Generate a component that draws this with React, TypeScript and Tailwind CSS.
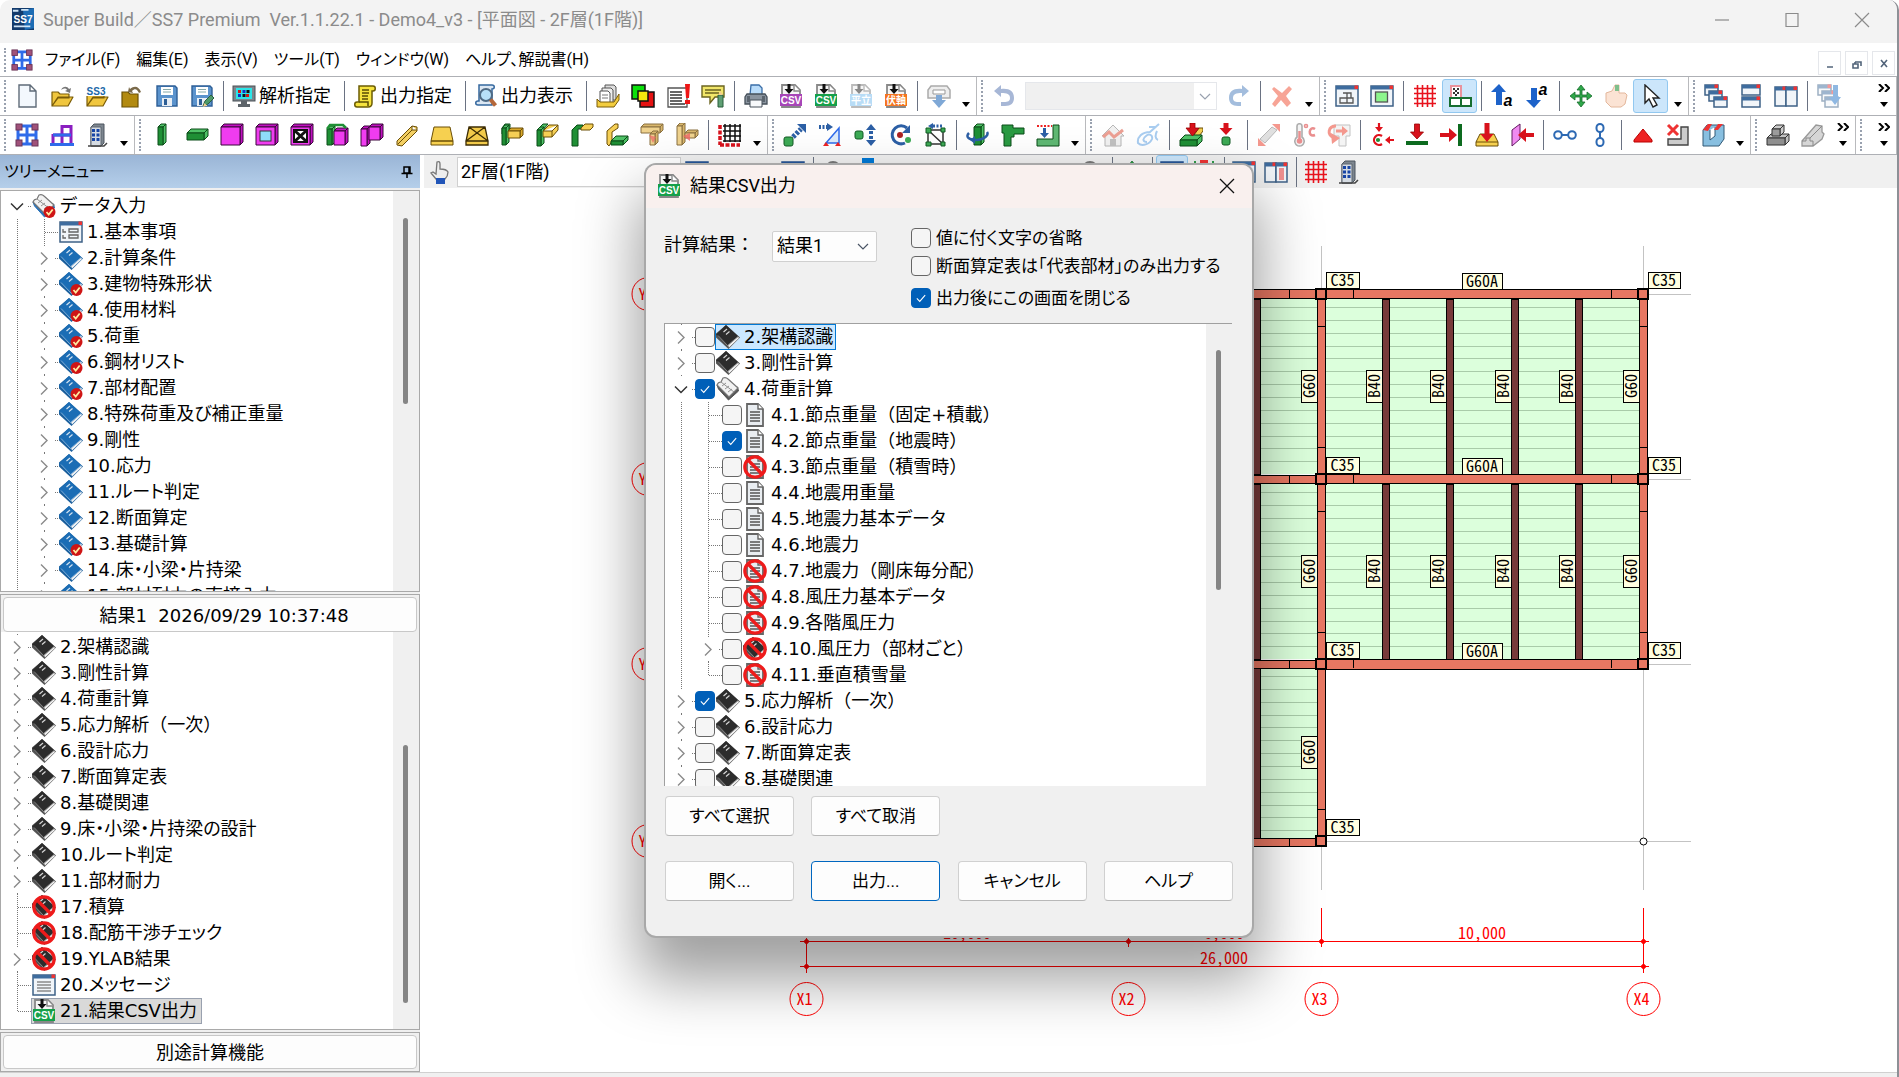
import React from "react";
import { clsx } from "clsx";

const TREE_FONT =
  "font-['DejaVu_Sans','Noto_Sans_CJK_JP',sans-serif] [font-feature-settings:'palt']";
const UI_FONT =
  "font-['Roboto','Noto_Sans_CJK_JP',sans-serif] [font-feature-settings:'palt']";

type PrismProps = {
  x: number;
  y: number;
  w: number;
  h: number;
  d?: number;
  fill: string;
  side: string;
  line?: string;
};

function Prism({ x, y, w, h, d = 3, fill, side, line = "#222" }: PrismProps) {
  return (
    <g stroke={line} strokeWidth="1" strokeLinejoin="round">
      <path
        d={`M${x} ${y}l${d} ${-d}h${w}v${h}l${-d} ${d}v${-h}z`}
        fill={side}
      />
      <path d={`M${x + w} ${y}l${d} ${-d}`} />
      <rect x={x} y={y} width={w} height={h} fill={fill} />
    </g>
  );
}

const GREEN = { fill: "#1f8f35", side: "#4fc267", line: "#0b4d18" };
const PINK = { fill: "#f03cf0", side: "#c010c0", line: "#3b063b" };
const GOLD = { fill: "#f5cf55", side: "#d9a92c", line: "#6b4e06" };
const TAN = { fill: "#efd28e", side: "#d9b76c", line: "#8a7140" };

const sheet = (
  <path d="M4 1h11l5 5v17H4z" fill="#e9edf1" stroke="#666" strokeWidth="1.8" />
);

function CsvArt({ color, label, faded }: { color: string; label: string; faded?: boolean }) {
  return (
    <g>
      <path d="M3 1h13l5 5v17H3z" fill="#f6f6f6" stroke={faded ? "#bbb" : "#888"} strokeWidth="1.8" />
      <path d="M15 1v6h6" fill="#fff" stroke={faded ? "#bbb" : "#888"} strokeWidth="1.4" />
      <rect x="1" y="10" width="22" height="12" fill={color} />
      <path d="M8.500 0v5h-3l4.500 5 4.500-5h-3v-5z" fill={faded ? "#888" : "#111"} />
      <text
        x="12"
        y="20"
        textAnchor="middle"
        fontSize="10"
        fontWeight="bold"
        fill="#fff"
        className="font-['Liberation_Sans','Noto_Sans_CJK_JP',sans-serif]"
      >
        {label}
      </text>
    </g>
  );
}

function BookArt({ cover, edge }: { cover: string; edge: string }) {
  return (
    <g strokeLinejoin="round">
      <path d="M10 0L24 12.500 12.500 24 0 12.500v-4z" fill={edge} />
      <path d="M22 11.500l1 1.500-10 9.500-1-2.500z" fill="#f4f4f4" />
      <path d="M10 0l12.500 11.500L11.500 21 0 9.500z" fill={cover} />
      <path d="M2 10.500l9.500 10 10.500-9" stroke="#fff" strokeOpacity=".55" strokeWidth=".8" fill="none" />
      <path d="M7.500 7l3.500-3M10 9.500l3.500-3" stroke="#fff" strokeOpacity=".8" strokeWidth="1.200" />
    </g>
  );
}

function OpenBookArt({ cover }: { cover: string }) {
  return (
    <g strokeLinejoin="round">
      <path d="M1 8l1.500 4 10 11 10-9-1-4z" fill={cover} stroke={cover} />
      <path d="M1 8c1-3 3-3 4-3l2-4c3-1 4 0 5 1l10 9-9 9z" fill="#f2f2f2" stroke="#777" strokeWidth="1.200" />
      <path d="M5 5l13 10M6 9l4-3M9 12l4-3M12 15l4-3" stroke="#888" strokeWidth=".9" fill="none" />
    </g>
  );
}

const checkBadge = (
  <g>
    <circle cx="17.500" cy="18" r="6" fill="#cf1515" />
    <path d="M14.500 18l2.200 2.500 4-5" stroke="#ffe9a0" strokeWidth="1.800" fill="none" />
  </g>
);

const prohibit = (
  <g fill="none" stroke="#ee1b1b" strokeWidth="3.200">
    <circle cx="12" cy="12" r="10.200" />
    <path d="M5 5l14 14" />
  </g>
);

const textPage = (
  <g>
    {sheet}
    <path d="M15 1v5h5" fill="#fff" stroke="#666" strokeWidth="1.400" />
    <path d="M7 9h10M7 12h10M7 15h10M7 18h10" stroke="#555" strokeWidth="1.400" />
  </g>
);

const redGrid = (
  <path
    d="M4.500 1v22M9.500 1v22M14.500 1v22M19.500 1v22M1 4.500h22M1 9.500h22M1 14.500h22M1 19.500h22"
    stroke="#e8121c"
    strokeWidth="1.600"
  />
);

const planFrame = (
  <g>
    <path d="M3 3h18v18H3zM3 12h18M12 3v18" fill="none" stroke="#2f6bea" strokeWidth="3" />
    {[
      [1, 1],
      [17, 1],
      [1, 17],
      [17, 17],
    ].map(([x, y]) => (
      <rect key={`${x}-${y}`} x={x} y={y} width="6" height="6" fill="#a0527a" stroke="#6b3558" />
    ))}
  </g>
);

const building = (
  <g>
    <path d="M6 4l3-3h10v19l-3 3H6z" fill="#7d868f" stroke="#4c555e" />
    <path d="M6 4h10v19H6z" fill="#d5dbe2" stroke="#5c656e" />
    <path d="M8.500 6v13M13 6v13" stroke="#1745a5" strokeWidth="3" strokeDasharray="3 1.500" />
    <path d="M3 23h16l3-3" stroke="#444" strokeWidth="1.500" fill="none" />
  </g>
);

function WindowArt({ children, x = 1, y = 2, w = 22, h = 20 }: { children?: React.ReactNode; x?: number; y?: number; w?: number; h?: number }) {
  return (
    <g>
      <rect x={x} y={y} width={w} height={h} fill="#f1f5f9" stroke="#3e6187" strokeWidth="1.500" />
      <rect x={x} y={y} width={w} height="3.500" fill="#3e6c9e" />
      <rect x={x + w - 3.500} y={y - 0.500} width="3.500" height="3.500" fill="#e33" />
      {children}
    </g>
  );
}

const folder = (
  <path d="M2 22V8h6l2 2h9v4H8zM2 22l6-9h15l-5 9z" fill="#f0c63e" stroke="#7a5c08" strokeWidth="1.200" strokeLinejoin="round" />
);

const floppy = (
  <g>
    <path d="M2 2h18l2 2v18H2z" fill="#5b93cd" stroke="#2e5f96" strokeWidth="1.400" />
    <rect x="6" y="3" width="12" height="8" fill="#fff" />
    <path d="M8 5.500h8M8 8h8" stroke="#8aa" />
    <rect x="7" y="14" width="10" height="8" fill="#e8eef5" />
    <rect x="9" y="15" width="3" height="6" fill="#2e5f96" />
  </g>
);

const downRed = <path d="M9.500 1h5v8h4l-6.500 7L5.500 9h4z" fill="#d8121c" stroke="#900" strokeWidth=".8" />;

const icons: Record<string, React.ReactNode> = {
  newFile: <path d="M4 1h11l6 6v16H4z M15 1v6h6" fill="#f3f8fd" stroke="#5f6b78" strokeWidth="1.400" />,
  open: (
    <g>
      {folder}
      <path d="M11 6c2-4 6-4 8-1l2-1-1 5-5-2 2-1c-1-2-3-2-6 0" fill="#777" />
    </g>
  ),
  ss3: (
    <g>
      {folder}
      <rect x="1" y="1" width="20" height="11" fill="#fff" />
      <text x="11" y="11" textAnchor="middle" fontSize="10" fontWeight="bold" fill="#2168a8" className="font-['Liberation_Sans',sans-serif]">
        SS3
      </text>
    </g>
  ),
  closeFolder: (
    <g>
      <path d="M2 23V8h6l2 2h8v13z" fill="#b28a10" stroke="#6b5104" strokeWidth="1.200" />
      <path d="M10 5c5-4 9-2 11 3l-2 1c-2-4-4-5-7-2l1 2-5-1 1-5z" fill="#7a6a4a" />
    </g>
  ),
  save: floppy,
  saveEdit: (
    <g>
      {floppy}
      <path d="M13 22l2-5 6-6 3 3-6 6z" fill="#4f9a6b" stroke="#2b5f3f" />
      <path d="M13 23l1.500-4 2.500 2.500z" fill="#f3cf8e" />
    </g>
  ),
  monitor: (
    <g>
      <rect x="1" y="2" width="22" height="15" fill="#7d868d" stroke="#4a5056" />
      <rect x="4" y="4" width="16" height="11" fill="#2ce5e8" />
      <path d="M6 6h3v3H6zM14 10h3v3h-3z" fill="#d31515" />
      <path d="M10.500 6h3v3h-3zM6 10h3v3H6z" fill="#1230c8" />
      <path d="M10.500 10h3v3h-3zM14.500 6h3v3h-3z" fill="#111" />
      <path d="M9 17h6v3h3v3H6v-3h3z" fill="#5d646a" />
    </g>
  ),
  scroll: (
    <g>
      <path d="M6 2h14c3 0 3 5 0 5h-1v12c0 3-2 4-4 4H4c-3 0-3-5 0-5h2z" fill="#f6e33e" stroke="#6b5c05" strokeWidth="1.500" />
      <path d="M9 6h7M9 9h7M9 12h6M9 15h6M6 18h9v4" stroke="#5b4e05" strokeWidth="1.500" fill="none" />
    </g>
  ),
  preview: (
    <g>
      <path d="M5 1h13c3 0 3 4 0 4v16H4c-3 0-3-4 0-4h1z" fill="#dbe7f3" stroke="#35689f" strokeWidth="1.500" />
      <circle cx="12" cy="11" r="6" fill="#b7e0f8" stroke="#4f6b85" strokeWidth="2" />
      <path d="M16.500 15.500l5 6" stroke="#b5673a" strokeWidth="4" />
    </g>
  ),
  files: (
    <g>
      <path d="M9 1h9l2 2v13H9z" fill="#ddd" stroke="#555" />
      <path d="M6 4h9l2 2v13H6z" fill="#eee" stroke="#555" />
      <path d="M4 7h8l2 2v10H4z" fill="#fff" stroke="#555" />
      <path d="M6 11h6M6 14h6" stroke="#777" />
      <path d="M1 15l3 3h14l5-8v6l-5 7H1z" fill="#f3cd3f" stroke="#7a5c08" />
    </g>
  ),
  overlap: (
    <g stroke="#111" strokeWidth="1.500">
      <path d="M1 1h13v14H1z" fill="#0be00b" />
      <path d="M9 8h14v15H9z" fill="#e51212" />
      <path d="M7 7h10v10H7z" fill="#f6e80e" />
    </g>
  ),
  listAlert: (
    <g>
      <path d="M2 4h19v19H2z" fill="#fff" stroke="#555" strokeWidth="1.300" />
      <path d="M4 8h12M4 11h12M4 14h12M4 17h12M4 20h15" stroke="#333" strokeWidth="1.600" />
      <path d="M19 0h5l-1 14h-3zM19 16h5v4h-5z" fill="#ee1515" />
    </g>
  ),
  note: (
    <g>
      <path d="M1 2h22v11h-9l-5 6v-6H1z" fill="#f1e66a" stroke="#6b6420" strokeWidth="1.400" />
      <path d="M4 6h16M4 9h14" stroke="#6b6420" strokeWidth="1.300" />
      <path d="M17 11h5v12h-5z" fill="#5f9f74" stroke="#295c3b" />
      <path d="M17 11l2.500-4 2.500 4z" fill="#f3cf8e" />
    </g>
  ),
  printer: (
    <g>
      <path d="M7 1h8l3 3v7H6z" fill="#b9dcfa" stroke="#3a6ea8" strokeWidth="1.300" />
      <path d="M3 10h18l2 3v7H1v-7z" fill="#8b95a0" stroke="#46505a" strokeWidth="1.300" />
      <path d="M6 16h12v7H6z" fill="#f7f9fb" stroke="#46505a" />
      <path d="M3 12h3v6H3zM18 12h3v6h-3z" fill="#5b656f" />
    </g>
  ),
  csvPurple: <CsvArt color="#a746b8" label="CSV" />,
  csvGreen: <CsvArt color="#16a04a" label="CSV" />,
  planCsv: <CsvArt color="#b8dcf6" label="平立" faded />,
  axisCsv: <CsvArt color="#f4741f" label="伏軸" />,
  exportGray: (
    <g>
      <path d="M4 2h16l3 4v8H1V6z" fill="#eee" stroke="#aaa" strokeWidth="1.500" />
      <path d="M6 6h12v4H6z" fill="#fff" stroke="#999" />
      <path d="M9 11h6v5h4l-7 8-7-8h4z" fill="#7fa8d6" />
    </g>
  ),
  undo: <path d="M2 7l7-6v4c8-1 13 2 13 9 0 5-3 8-9 8H9v-4h3c4 0 6-1 6-4 0-4-3-5-9-5v4z" fill="#a7b7d6" />,
  redo: <path d="M22 7l-7-6v4C7 4 2 7 2 14c0 5 3 8 9 8h3v-4h-3c-3 0-5-1-5-4 0-4 3-5 9-5v4z" fill="#a3bddd" />,
  cross: <path d="M4 3l8 6 7-7 3 3-6 7 5 7-4 4-6-7-6 7-3-3 6-8-6-7z" fill="#f7a496" />,
  winGrid: (
    <WindowArt>
      <path d="M8 9h4v5H5v5h13v-5h-6M12 9h4v5M12 14v5" fill="none" stroke="#555" strokeWidth="1.300" />
    </WindowArt>
  ),
  winGreen: (
    <WindowArt>
      <rect x="5.500" y="8" width="12" height="10" fill="#8df58d" stroke="#555" strokeWidth="1.300" />
    </WindowArt>
  ),
  redGrid,
  planBox: (
    <g>
      <path d="M3 2h10v12H3z" fill="#fff" stroke="#e9929c" strokeWidth="2" />
      <path d="M5 4h2v2H5zM9 4h2v2H9zM7 6h2v2H7zM5 8h2v2H5zM9 8h2v2H9zM7 10h2v2H7z" fill="#333" />
      <path d="M2 14h11v8H2zM13 14h10v8H13z" fill="#fff" stroke="#166e30" strokeWidth="2" />
    </g>
  ),
  sortUp: (
    <g>
      <path d="M8 0l7 8h-4v13H5V8H0z" fill="#1d62c9" />
      <text x="17" y="22" textAnchor="middle" fontSize="16" fontStyle="italic" fontWeight="bold" className="font-['Liberation_Sans',sans-serif]">a</text>
    </g>
  ),
  sortDown: (
    <g>
      <path d="M8 24l7-8h-4V4H5v12H0z" fill="#1d62c9" />
      <text x="17" y="11" textAnchor="middle" fontSize="16" fontStyle="italic" fontWeight="bold" className="font-['Liberation_Sans',sans-serif]">a</text>
    </g>
  ),
  move: (
    <path
      d="M12 1l4 5h-3v5h5V8l5 4-5 4v-3h-5v5h3l-4 5-4-5h3v-5H6v3l-5-4 5-4v3h5V6H8z"
      fill="#2fa84a"
      stroke="#176b2b"
      strokeWidth=".8"
    />
  ),
  thumb: (
    <g>
      <path d="M2 9l6-2 3-6h4v8h6l2 2-2 9-4 3H7l-5-5z" fill="#fbe3d4" stroke="#e3b79c" />
      <path d="M11 1h4v6h-4z" fill="#7ebf8c" />
    </g>
  ),
  cursor: <path d="M6 1v18l4-4 4 8 4-2-4-7h6z" fill="#fff" stroke="#222" strokeWidth="1.400" />,
  cascade: (
    <g>
      <WindowArt x={1} y={1} w={13} h={10} />
      <WindowArt x={5} y={7} w={13} h={10} />
      <WindowArt x={10} y={13} w={13} h={10} />
    </g>
  ),
  tileH: (
    <g>
      <WindowArt x={3} y={1} w={18} h={10} />
      <WindowArt x={3} y={13} w={18} h={10} />
    </g>
  ),
  tileV: (
    <g>
      <WindowArt x={1} y={3} w={11} h={19} />
      <WindowArt x={12} y={3} w={11} h={19} />
    </g>
  ),
  cascadeDown: (
    <g>
      <g opacity=".5">
        <WindowArt x={1} y={1} w={13} h={10} />
        <WindowArt x={5} y={7} w={13} h={10} />
        <WindowArt x={8} y={13} w={13} h={10} />
      </g>
      <path d="M16 1h5v12h3l-6 8-6-8h4z" fill="#8fb8e2" />
    </g>
  ),
  planFrame,
  frame: (
    <g fill="none" stroke="#8a1ec0" strokeWidth="3">
      <path d="M3 11v10M12 2v19M21 2v19M12 3.500h9M3 12h18" />
      <path d="M3 12h18" stroke="#2f6bea" />
      <path d="M0 21.500h24" stroke="#2f6bea" />
    </g>
  ),
  building,
  column: <Prism x={8} y={4} w={5} h={18} {...GREEN} />,
  beam: <Prism x={2} y={10} w={17} h={7} d={4} {...GREEN} />,
  wall: <Prism x={1} y={4} w={19} h={18} {...PINK} />,
  wallWindow: (
    <g>
      <Prism x={1} y={4} w={19} h={18} {...PINK} />
      <rect x="5" y="8" width="11" height="10" fill="#8fdcfa" stroke="#333" />
    </g>
  ),
  wallCross: (
    <g>
      <Prism x={1} y={4} w={19} h={18} {...PINK} />
      <rect x="4" y="7" width="13" height="12" fill="#fff" stroke="#111" strokeWidth="2" />
      <path d="M4 7l13 12M17 7L4 19" stroke="#111" strokeWidth="3" />
    </g>
  ),
  wallColumn: (
    <g>
      <Prism x={2} y={6} w={5} h={16} {...GREEN} />
      <Prism x={9} y={8} w={11} h={14} {...PINK} />
      <path d="M2 6l3-4h13l3 3" fill="none" stroke="#1f8f35" strokeWidth="2.500" />
    </g>
  ),
  wallSide: (
    <g>
      <Prism x={1} y={6} w={6} h={17} {...PINK} />
      <Prism x={9} y={4} w={11} h={13} {...PINK} />
    </g>
  ),
  brace: <path d="M2 18L17 3l5 1v4L7 23l-5-1z M17 3v4l5 0M17 7L3 21" fill="#f3cf62" stroke="#6b4e06" />,
  slab: <path d="M4 4h16l3 14H1zM1 18h22v4H1z" fill="#f6d050" stroke="#6b4e06" strokeLinejoin="round" />,
  slabCross: <path d="M4 4h16l3 14H1zM1 18h22v4H1zM4 4l19 14M20 4L1 18" fill="#f2ca4a" stroke="#3c2c04" strokeWidth="1.300" />,
  joint1: (
    <g>
      <path d="M2 5l3-4h5v5H6v5H2z" fill="#4fc267" stroke="#0b4d18" />
      <Prism x={2} y={5} w={4} h={17} {...GREEN} />
      <Prism x={8} y={8} w={12} h={7} {...GOLD} />
    </g>
  ),
  joint2: (
    <g>
      <path d="M2 7l6-6h5L7 8z" fill="#4fc267" stroke="#0b4d18" />
      <Prism x={2} y={7} w={4} h={16} {...GREEN} />
      <path d="M8 8l6-6h9v5l-6 7H8z M8 8h9l6-6M17 8v6" fill="#f5cf55" stroke="#6b4e06" />
    </g>
  ),
  joint3: (
    <g>
      <path d="M2 23V7l5-5h6v4H8v17z" fill="#1f8f35" stroke="#0b4d18" />
      <path d="M11 5l4-4h8v3l-3 3h-9z" fill="#f5cf55" stroke="#6b4e06" />
    </g>
  ),
  joint4: (
    <g>
      <path d="M2 21V8l8-7h3v4L7 9v9l-3 5z" fill="#f5cf55" stroke="#6b4e06" />
      <Prism x={6} y={18} w={12} h={4} d={5} {...GREEN} />
    </g>
  ),
  tee: (
    <g>
      <Prism x={1} y={4} w={19} h={6} {...TAN} />
      <Prism x={10} y={11} w={5} h={11} {...TAN} />
      <path d="M9 12l7 2-3 6z" fill="#e66" opacity=".7" />
    </g>
  ),
  teeSide: (
    <g>
      <Prism x={2} y={3} w={5} h={19} {...TAN} />
      <Prism x={10} y={10} w={10} h={5} {...TAN} />
      <path d="M8 13l7-3v8z" fill="#e66" opacity=".8" />
    </g>
  ),
  gridBlack: (
    <g>
      <path d="M7 1v18M12 1v18M17 1v18M22 1v18M5 3h18M5 8h18M5 13h18M5 18h18" stroke="#111" strokeWidth="1.500" />
      <path d="M2 2v20M2 22h20" stroke="#d8121c" strokeWidth="3.500" strokeDasharray="4 1.500" />
    </g>
  ),
  moveNode: (
    <g>
      <rect x="1" y="14" width="9" height="9" rx="2" fill="#3daa55" stroke="#135c25" />
      <path d="M10 14l8-8" stroke="#2c5fa5" strokeWidth="5" strokeDasharray="3 1.500" />
      <path d="M14 1h9v9z" fill="#2c5fa5" />
    </g>
  ),
  moveSupport: (
    <g>
      <path d="M21 5v15H8z" fill="#dcebfb" stroke="#2f6bea" strokeWidth="1.500" />
      <path d="M1 4h8" stroke="#2c5fa5" strokeWidth="4" strokeDasharray="2 1.500" />
      <path d="M9 0l6 4-6 4z" fill="#2c5fa5" />
      <path d="M5 23l3-4 3 4zM17 23l3-4 3 4z" fill="#e22" />
    </g>
  ),
  moveVert: (
    <g>
      <rect x="2" y="8" width="8" height="8" rx="2" fill="#3daa55" stroke="#135c25" />
      <path d="M18 1l5 6H13zM18 23l5-6H13zM16 8h4v3h-4zM16 13h4v3h-4z" fill="#2c5fa5" />
    </g>
  ),
  rotateNode: (
    <g>
      <path d="M19 5a9 9 0 1 0-2 15" fill="none" stroke="#2c5fa5" strokeWidth="3" />
      <path d="M22 2v8h-8z" fill="#2c5fa5" />
      <circle cx="12" cy="12" r="3" fill="#a22" />
      <circle cx="20" cy="17" r="3" fill="#3daa55" />
    </g>
  ),
  scaleNode: (
    <g>
      <path d="M5 7h15v14H5zM5 7l15 14" fill="none" stroke="#333" strokeWidth="1.500" />
      <path d="M19 3h-9" stroke="#2c5fa5" strokeWidth="3" strokeDasharray="2 1.500" />
      <path d="M10 0v6L5 3z" fill="#2c5fa5" />
      <path d="M3 5h5v5H3zM18 5h4v4h-4zM3 19h5v4H3zM18 19h4v4h-4z" fill="#3daa55" stroke="#135c25" />
    </g>
  ),
  spin: (
    <g>
      <Prism x={8} y={4} w={7} h={18} {...GREEN} />
      <path d="M3 10c-4 4 0 7 8 7 8-1 12-5 10-8" fill="none" stroke="#2c5fa5" strokeWidth="2.500" />
      <path d="M9 13v8l-5-4z" fill="#2c5fa5" />
    </g>
  ),
  corner: <path d="M1 2h11v3h11v6H13v3h-3v9H3V10H1z" fill="#2a9a42" stroke="#0b4d18" />,
  level: (
    <g>
      <path d="M1 23v-7h16V2h6v21z" fill="#5fb873" stroke="#0b4d18" />
      <path d="M1 3h15" stroke="#e22" strokeWidth="2" strokeDasharray="2 1.500" />
      <path d="M7 5v5H4l4.500 5 4.500-5h-3V5z" fill="#2c5fa5" />
    </g>
  ),
  house: (
    <g opacity=".6">
      <path d="M1 13L12 2l11 11h-3v10H4V13z" fill="#e8e8e8" stroke="#888" />
      <path d="M2 14l6-5 5 5 9-7" stroke="#e0604c" strokeWidth="3" fill="none" />
      <rect x="9" y="16" width="6" height="7" fill="#999" />
    </g>
  ),
  wind: (
    <g fill="none" stroke="#a9cdf0" strokeWidth="2">
      <path d="M23 1l-9 8C6 9 1 14 2 20c4 4 12 1 14-4 1-4-3-6-6-3-4 3-3 6 1 6M13 4h6M21 8c-2 4-2 8 1 9" />
    </g>
  ),
  loadBeam: (
    <g>
      <path d="M15 12l5-7h4v3l-7 9z" fill="#f5cf55" stroke="#6b4e06" />
      <Prism x={1} y={17} w={17} h={6} d={5} {...GREEN} />
      <path d="M11 0h5v5h4l-6.500 8L7 5h4z" fill="#d8121c" stroke="#900" strokeWidth=".8" />
    </g>
  ),
  loadNode: (
    <g>
      <path d="M9.500 0h5v5h4L12 12 5.500 5h4z" fill="#d8121c" />
      <rect x="8" y="14" width="8" height="8" rx="2" fill="#3daa55" stroke="#135c25" />
    </g>
  ),
  memberGray: (
    <g opacity=".6">
      <path d="M3 16L15 4l5 3L8 20z" fill="#ccc" stroke="#888" />
      <path d="M15 1h8v8zM1 15v8h8z" fill="#e54" />
    </g>
  ),
  temperature: (
    <g opacity=".6" fill="none" stroke="#d44" strokeWidth="1.600">
      <path d="M5 3c0-3 5-3 5 0v11c4 3 2 9-2.500 9S1 17 5 14z" fill="#eee" stroke="#777" />
      <path d="M7.500 8v8" strokeWidth="2.500" />
      <circle cx="7.500" cy="18" r="2" fill="#d44" />
      <circle cx="14" cy="3" r="1.500" />
      <path d="M23 6c-6-4-8 9 0 6" strokeWidth="2.500" />
    </g>
  ),
  rotateGray: (
    <g opacity=".6">
      <path d="M7 2h16v11h-4v10h-7V13H7z" fill="#eee" stroke="#999" />
      <path d="M9 3C1 3 0 12 6 14M9 8h8" fill="none" stroke="#e54" strokeWidth="3" />
      <path d="M4 10l9 5-8 6zM15 3l6 5-6 5z" fill="#e54" />
    </g>
  ),
  moment: (
    <g fill="none" stroke="#e0121c" strokeWidth="2.200">
      <path d="M9 0v5M24 17h-5M12 13a5 5 0 1 0 0 8" />
      <path d="M9 9L5 4h8zM15 17l5-4v8z" fill="#e0121c" stroke="none" />
      <circle cx="8" cy="17" r="1" fill="#1f8f35" stroke="#1f8f35" />
    </g>
  ),
  loadGround: (
    <g>
      {downRed}
      <rect x="1" y="18" width="22" height="4" fill="#0d6b1f" />
    </g>
  ),
  loadWall: (
    <g>
      <path d="M0 10h9V5l8 7-8 7v-5H0z" fill="#d8121c" />
      <rect x="18" y="1" width="4" height="22" fill="#0d6b1f" />
    </g>
  ),
  loadSlab: (
    <g>
      <path d="M5 11h14l4 8v4H1v-4z M1 19h22" fill="#f6d050" stroke="#6b4e06" />
      <path d="M9.500 0h5v11h4l-6.500 8-6.500-8h4z" fill="#d8121c" />
    </g>
  ),
  loadPanel: (
    <g>
      <path d="M2 7l8-6v15l-8 7z" fill="#f08af0" stroke="#611a61" />
      <path d="M24 10h-8V5l-8 7 8 7v-5h8z" fill="#d8121c" />
    </g>
  ),
  linkH: (
    <g fill="#fff" stroke="#2d69b3" strokeWidth="2">
      <path d="M7 12h10" />
      <circle cx="5" cy="12" r="3.800" />
      <circle cx="19" cy="12" r="3.800" />
    </g>
  ),
  linkV: (
    <g fill="#fff" stroke="#2d69b3" strokeWidth="2">
      <path d="M12 7v10" />
      <rect x="8.500" y="1" width="7" height="8" rx="3.500" />
      <rect x="8.500" y="15" width="7" height="8" rx="3.500" />
    </g>
  ),
  support: <path d="M12 6l9 11v2H3v-2z" fill="#ee2222" stroke="#b00" />,
  cornerCut: (
    <g>
      <path d="M15 4h7v18H2v-6h13z" fill="#ccc" stroke="#444" strokeWidth="1.400" />
      <path d="M2 2l10 10M12 2L2 12" stroke="#e33" strokeWidth="3" />
    </g>
  ),
  pocket: (
    <g>
      <path d="M2 7l4-5h17v14l-5 7H2z" fill="#88bfe0" stroke="#335a77" />
      <path d="M9 7v10l5-4V4" fill="#fff" stroke="#335a77" />
      <path d="M2 7l5-6h4L7 8zM13 7l4-6h5l-5 6z" fill="#e33" />
    </g>
  ),
  footing: (
    <g>
      <Prism x={1} y={15} w={18} h={7} d={4} fill="#8f8f8f" side="#c2c2c2" line="#333" />
      <Prism x={6} y={6} w={8} h={7} d={4} fill="#9b9b9b" side="#ccc" line="#333" />
    </g>
  ),
  footingLong: (
    <g>
      <path d="M1 18L15 2l6 1v6l2 2-2 5-9 7H1z" fill="#d6d6d6" stroke="#999" strokeWidth="1.300" />
      <path d="M1 18h4v-3h4v3h3v5M9 15l12-12" fill="none" stroke="#888" />
    </g>
  ),
  hand: (
    <g>
      <path d="M9 2c2-1 3 0 3 2v5c3 0 7 1 8 3 0 3-1 5-3 7H8l-5-6 2-1 3 2z" fill="#eee" stroke="#777" strokeWidth="1.300" />
      <rect x="8" y="18" width="9" height="6" fill="#2155b8" />
    </g>
  ),
  magnifier: <circle cx="12" cy="9" r="7" fill="#e5eef5" stroke="#777" strokeWidth="2" />,
  magnifierPlus: <path d="M5 9a7 7 0 1 0 14 0a7 7 0 1 0-14 0M12 5v8M8 9h8" fill="#e5eef5" stroke="#777" strokeWidth="2" />,
  app: (
    <g>
      <rect x="0" y="0" width="24" height="24" fill="#123a6b" />
      <path d="M12 2l12-2v22l-10 2z" fill="#1d6cb4" />
      <path d="M1 3h6M10 2h8M2 20h18" stroke="#cfe4f5" strokeWidth="2" />
      <text x="12" y="16" textAnchor="middle" fontSize="11" fontWeight="bold" fill="#fff" className="font-['Liberation_Sans',sans-serif]">
        SS7
      </text>
    </g>
  ),
  splitWindow: (
    <g>
      <WindowArt x={1} y={3} w={11} h={19} />
      <WindowArt x={12} y={3} w={11} h={19}>
        <rect x="15" y="8" width="5" height="12" fill="#f09090" />
      </WindowArt>
    </g>
  ),
  form: (
    <WindowArt>
      <path d="M4 9v3h3M4 15v3h3M10 9h9v3h-9zM10 15h9v3h-9z" fill="none" stroke="#666" strokeWidth="1.300" />
    </WindowArt>
  ),
  message: (
    <WindowArt>
      <path d="M5 9h14M5 12h14M5 15h14M5 18h14" stroke="#8a8a8a" strokeWidth="1.300" />
    </WindowArt>
  ),
  panelBlue: <rect x="1" y="2" width="22" height="20" fill="#2f66b5" stroke="#24508f" strokeWidth="1.500" />,
  chart: (
    <g>
      <path d="M3 1v22M21 1v22" stroke="#2f9a48" strokeWidth="2" />
      <path d="M8 0h8v10H8zM4 4h4v10H4zM16 4h4v10h-4z" fill="#e33" />
    </g>
  ),
  book: <BookArt cover="#1b6db5" edge="#1b5f9c" />,
  bookChecked: (
    <g>
      <BookArt cover="#1b6db5" edge="#1b5f9c" />
      {checkBadge}
    </g>
  ),
  bookOpenChecked: (
    <g>
      <OpenBookArt cover="#2a72b8" />
      {checkBadge}
    </g>
  ),
  bookOpen: <OpenBookArt cover="#555" />,
  bookDark: <BookArt cover="#2c2c2c" edge="#555" />,
  bookBanned: (
    <g>
      <BookArt cover="#2c2c2c" edge="#555" />
      {prohibit}
    </g>
  ),
  page: textPage,
  pageBanned: (
    <g>
      {textPage}
      {prohibit}
    </g>
  ),
};

function Icon({ name, className = "size-6" }: { name: string; className?: string }) {
  return (
    <svg viewBox="0 0 24 24" className={clsx("shrink-0", className)} aria-hidden="true">
      {icons[name]}
    </svg>
  );
}

type ToolItem = string | { icon: string; label?: string; active?: boolean };
type ToolGroup = { items: ToolItem[]; menu?: boolean; overflow?: boolean; fill?: boolean };

const mainTools: ToolGroup[] = [
  {
    menu: true,
    items: [
      "newFile", "open", "ss3", "closeFolder", "save", "saveEdit", "|",
      { icon: "monitor", label: "解析指定" }, "|",
      { icon: "scroll", label: "出力指定" }, "|",
      { icon: "preview", label: "出力表示" }, "|",
      "files", "overlap", "listAlert", "note", "|",
      "printer", "csvPurple", "csvGreen", "planCsv", "axisCsv", "|", "exportGray",
    ],
  },
  { menu: true, items: ["undo", "history", "redo", "|", "cross"] },
  {
    menu: true,
    items: [
      "winGrid", "winGreen", "|", "redGrid", { icon: "planBox", active: true }, "|",
      "sortUp", "sortDown", "|", "move", "thumb", { icon: "cursor", active: true },
    ],
  },
  { overflow: true, fill: true, items: ["cascade", "tileH", "tileV", "|", "cascadeDown"] },
];

const memberTools: ToolGroup[] = [
  { menu: true, items: ["planFrame", "frame", "building"] },
  {
    menu: true,
    items: [
      "column", "beam", "wall", "wallWindow", "wallCross", "wallColumn", "wallSide", "brace",
      "slab", "slabCross", "joint1", "joint2", "joint3", "joint4", "tee", "teeSide", "|", "gridBlack",
    ],
  },
  {
    menu: true,
    items: ["moveNode", "moveSupport", "moveVert", "rotateNode", "scaleNode", "|", "spin", "corner", "level"],
  },
  {
    menu: true,
    items: [
      "house", "wind", "|", "loadBeam", "loadNode", "|", "memberGray", "temperature", "rotateGray", "|",
      "moment", "loadGround", "loadWall", "loadSlab", "loadPanel", "|", "linkH", "linkV", "|",
      "support", "cornerCut", "pocket",
    ],
  },
  { overflow: true, items: ["footing", "footingLong"] },
  { overflow: true, fill: true, items: [] },
];

function Separator() {
  return (
    <span className="flex w-2 shrink-0 justify-center">
      <span className="h-[30px] w-px bg-gray-500" />
    </span>
  );
}

function DropArrow() {
  return (
    <svg viewBox="0 0 8 5" className="h-[5px] w-2" aria-hidden="true">
      <path d="M0 0h8L4 5z" fill="#000" />
    </svg>
  );
}

function Chevron({ className }: { className?: string }) {
  return (
    <svg viewBox="0 0 12 7" className={clsx("h-[7px] w-3 shrink-0", className)} aria-hidden="true">
      <path d="M1 1l5 5 5-5" fill="none" stroke="currentColor" strokeWidth="1.200" />
    </svg>
  );
}

function Tool({ item }: { item: ToolItem }) {
  if (item === "|") return <Separator />;
  if (item === "history") {
    return (
      <span className="mx-1 flex h-7 w-[192px] shrink-0 border border-gray-200">
        <select aria-label="履歴" disabled className="min-w-0 grow appearance-none bg-[#f0f0f0]" />
        <span className="flex w-[22px] items-center justify-center text-gray-400">
          <Chevron />
        </span>
      </span>
    );
  }
  const tool = typeof item === "string" ? { icon: item } : item;
  const { icon, label, active } = tool as { icon: string; label?: string; active?: boolean };
  return (
    <button
      type="button"
      aria-label={label ?? icon}
      className={clsx(
        "flex shrink-0 items-center text-lg leading-6",
        label ? "h-[34px] w-[113px] gap-[3px] pl-[5px]" : "h-[34px] w-[35px] justify-center",
        active && "rounded-[3px] border border-[#92c8f0] bg-[#cce6fb]"
      )}
    >
      <Icon name={icon} />
      {label && <span className="whitespace-nowrap">{label}</span>}
    </button>
  );
}

function Toolbar({ groups }: { groups: ToolGroup[] }) {
  return (
    <div className="flex h-[39px] shrink-0 items-stretch overflow-hidden border-b border-[#aeb0b5] bg-white">
      {groups.map((group, i) => (
        <div
          key={i}
          className={clsx(
            "flex items-center border-r border-[#b9babd]",
            group.fill ? "grow" : "shrink-0"
          )}
        >
          <span className="flex w-[9px] shrink-0 justify-center">
            <span className="h-8 border-l-2 border-dotted border-gray-400" />
          </span>
          {group.items.map((item, n) => (
            <Tool key={n} item={item} />
          ))}
          {group.menu && (
            <button type="button" aria-label="その他" className="flex h-full w-5 items-end justify-center pb-2">
              <DropArrow />
            </button>
          )}
          {group.overflow && (
            <button
              type="button"
              aria-label="ツールバーのオプション"
              className="ml-auto flex h-full w-[25px] flex-col items-center justify-between pt-[7px] pb-2"
            >
              <svg viewBox="0 0 12 8" className="h-2 w-3" aria-hidden="true">
                <path d="M1 0l4 4-4 4M7 0l4 4-4 4" fill="none" stroke="#000" strokeWidth="2" />
              </svg>
              <DropArrow />
            </button>
          )}
        </div>
      ))}
    </div>
  );
}

type Cell = "line" | "tee" | "end" | "closed" | "open";

// One 27px column of tree guides: dotted connectors, or an expander chevron
function Guide({ kind }: { kind: Cell }) {
  const dotted = { stroke: "#777", strokeDasharray: "1 1", fill: "none" };
  return (
    <svg viewBox="0 0 27 26" className="h-[26px] w-[27px] shrink-0" aria-hidden="true">
      {kind === "line" && <path d="M13.500 0v26" {...dotted} />}
      {kind === "tee" && <path d="M13.500 0v26M14 13.500h13" {...dotted} />}
      {kind === "end" && <path d="M13.500 0v14M14 13.500h13" {...dotted} />}
      {kind === "closed" && (
        <g>
          <path d="M13.500 0v2M13.500 25v1M24 13.500h3" {...dotted} />
          <path d="M10 7.500l6 6-6 6" fill="none" stroke="#8a8a8a" strokeWidth="1.400" />
        </g>
      )}
      {kind === "open" && (
        <g>
          <path d="M24 13.500h3" {...dotted} />
          <path d="M7 10.500l6 6 6-6" fill="none" stroke="#333" strokeWidth="1.500" />
        </g>
      )}
    </svg>
  );
}

// Kana are set proportionally, full-width brackets and colons keep their full advance
function Label({ text }: { text: string }) {
  return (
    <span className="whitespace-pre">
      {text.split(/([（）：])/).map((part, i) =>
        /^[（）：]$/.test(part) ? (
          <span key={i} className="[font-feature-settings:normal]">{part}</span>
        ) : (
          part
        )
      )}
    </span>
  );
}

type TreeNode = { text: string; icon: string; cells: Cell[]; selected?: boolean; checked?: boolean };

const child = (text: string, icon = "book"): TreeNode => ({ text, icon, cells: ["line", "closed"] });

const inputTree: TreeNode[] = [
  { text: "データ入力", icon: "bookOpenChecked", cells: ["open"] },
  { text: "1.基本事項", icon: "form", cells: ["line", "tee"] },
  child("2.計算条件"),
  child("3.建物特殊形状", "bookChecked"),
  child("4.使用材料", "bookChecked"),
  child("5.荷重", "bookChecked"),
  child("6.鋼材リスト", "bookChecked"),
  child("7.部材配置", "bookChecked"),
  child("8.特殊荷重及び補正重量"),
  child("9.剛性"),
  child("10.応力"),
  child("11.ルート判定"),
  child("12.断面算定"),
  child("13.基礎計算", "bookChecked"),
  child("14.床・小梁・片持梁"),
  child("15.部材耐力の直接入力"),
];

const closed = (text: string, icon = "bookDark"): TreeNode => ({ text, icon, cells: ["closed"] });

const resultTree: TreeNode[] = [
  closed("2.架構認識"),
  closed("3.剛性計算"),
  closed("4.荷重計算"),
  closed("5.応力解析（一次）"),
  closed("6.設計応力"),
  closed("7.断面算定表"),
  closed("8.基礎関連"),
  closed("9.床・小梁・片持梁の設計"),
  closed("10.ルート判定"),
  closed("11.部材耐力"),
  { text: "17.積算", icon: "bookBanned", cells: ["tee"] },
  { text: "18.配筋干渉チェック", icon: "bookBanned", cells: ["tee"] },
  closed("19.YLAB結果", "bookBanned"),
  { text: "20.メッセージ", icon: "message", cells: ["tee"] },
  { text: "21.結果CSV出力", icon: "csvGreen", cells: ["end"], selected: true },
];

const leaf = (text: string, icon = "page", checked = false): TreeNode => ({
  text,
  icon,
  checked,
  cells: ["line", "tee"],
});

const csvTree: TreeNode[] = [
  { ...closed("2.架構認識"), selected: true },
  closed("3.剛性計算"),
  { text: "4.荷重計算", icon: "bookOpen", cells: ["open"], checked: true },
  leaf("4.1.節点重量（固定+積載）"),
  leaf("4.2.節点重量（地震時）", "page", true),
  leaf("4.3.節点重量（積雪時）", "pageBanned"),
  leaf("4.4.地震用重量"),
  leaf("4.5.地震力基本データ"),
  leaf("4.6.地震力"),
  leaf("4.7.地震力（剛床毎分配）", "pageBanned"),
  leaf("4.8.風圧力基本データ", "pageBanned"),
  leaf("4.9.各階風圧力", "pageBanned"),
  { text: "4.10.風圧力（部材ごと）", icon: "bookBanned", cells: ["line", "closed"] },
  { text: "4.11.垂直積雪量", icon: "pageBanned", cells: ["line", "end"] },
  { ...closed("5.応力解析（一次）"), checked: true },
  closed("6.設計応力"),
  closed("7.断面算定表"),
  closed("8.基礎関連"),
];

function SideTree({ nodes }: { nodes: TreeNode[] }) {
  return (
    <ul className="min-w-0 grow overflow-hidden bg-white pt-0.5 pl-[3px]">
      {nodes.map((node) => (
        <li key={node.text} className="flex h-[26px] items-center">
          {node.cells.map((cell, i) => (
            <Guide key={i} kind={cell} />
          ))}
          <span
            className={clsx(
              "flex h-[26px] items-center gap-1 border pr-1",
              node.selected ? "border-gray-400 bg-[#d9d9d9]" : "border-transparent"
            )}
          >
            <Icon name={node.icon} />
            <Label text={node.text} />
          </span>
        </li>
      ))}
    </ul>
  );
}

function ScrollTrack({ className, thumb }: { className: string; thumb: string }) {
  return (
    <div className={clsx("flex w-[26px] shrink-0 justify-center bg-[#f0f0f0] pr-0.5", className)}>
      <div className={clsx("w-[5px] rounded-full bg-[#858585]", thumb)} />
    </div>
  );
}

function Checkbox({ checked, label }: { checked?: boolean; label?: string }) {
  return (
    <span className="grid size-5 shrink-0 place-items-center">
      <input
        type="checkbox"
        defaultChecked={checked}
        aria-label={label}
        className="peer col-start-1 row-start-1 size-5 appearance-none rounded-[4px] border border-[#666] bg-[#f5f5f5] checked:border-[#005fb8] checked:bg-[#005fb8]"
      />
      <svg viewBox="0 0 12 12" className="pointer-events-none col-start-1 row-start-1 hidden size-2.5 peer-checked:block" aria-hidden="true">
        <path d="M1 6.500l3.500 3.500L11 2.500" fill="none" stroke="#fff" strokeWidth="1.300" />
      </svg>
    </span>
  );
}

function Option({ label, checked }: { label: string; checked?: boolean }) {
  return (
    <label className="flex h-7 items-center gap-[5px] text-[17px] whitespace-nowrap">
      <Checkbox checked={checked} />
      {label}
    </label>
  );
}

function DialogButton({ children, primary }: { children: React.ReactNode; primary?: boolean }) {
  return (
    <button
      type="button"
      className={clsx(
        "h-10 rounded-[4px] border bg-[#fdfdfd] text-[17px]",
        primary ? "border-[#0067c0]" : "border-[#d0d0d0] border-b-[#b8b8b8]"
      )}
    >
      {children}
    </button>
  );
}

function CsvDialog() {
  return (
    <section
      role="dialog"
      aria-labelledby="csv-title"
      className={clsx(
        "absolute top-[165px] left-[646px] w-[606px] overflow-hidden rounded-[10px] bg-[#f0f0f0] pb-[35px] text-lg leading-6 shadow-[0_0_0_2px_#a8a8a8,0_36px_60px_8px_rgba(0,0,0,0.38)]",
        UI_FONT
      )}
    >
      <header className="flex h-[43px] items-center bg-[#f9f0ee] pr-[17px] pb-0.5 pl-[11px]">
        <Icon name="csvGreen" />
        <h2 id="csv-title" className="ml-[9px] grow">結果CSV出力</h2>
        <button type="button" aria-label="閉じる">
          <svg viewBox="0 0 16 16" className="size-4" aria-hidden="true">
            <path d="M1 1l14 14M15 1L1 15" stroke="#111" strokeWidth="1.300" />
          </svg>
        </button>
      </header>

      <div className="flex pt-4 pl-[18px]">
        <label htmlFor="result" className="flex h-[42px] w-[108px] items-center">
          <Label text="計算結果：" />
        </label>
        <div className="mt-1.5 flex h-8 items-center">
          <select
            id="result"
            className="h-[31px] w-[105px] appearance-none rounded-[2px] border border-[#d0d0d0] bg-[#fdfdfd] pl-1"
          >
            <option>結果1</option>
          </select>
          <Chevron className="-ml-5 text-gray-600" />
        </div>
        <div className="ml-[42px] flex flex-col">
          <Option label="値に付く文字の省略" />
          <Option label="断面算定表は「代表部材」のみ出力する" />
          <div className="pt-1">
            <Option label="出力後にこの画面を閉じる" checked />
          </div>
        </div>
      </div>

      <div className={clsx("mt-[11px] mr-5 ml-[18px] flex h-[463px] border-t border-l border-[#a0a0a0] bg-white", TREE_FONT)}>
        <ul className="min-w-0 grow overflow-hidden pl-[3px]">
          {csvTree.map((node) => (
            <li key={node.text} className="flex h-[26px] items-center">
              {node.cells.map((cell, i) => (
                <Guide key={i} kind={cell} />
              ))}
              <Checkbox checked={node.checked} label={node.text} />
              <span
                className={clsx(
                  "flex h-[26px] items-center gap-1 border pr-0.5",
                  node.selected ? "border-[#0078d4] bg-[#cce8ff]" : "border-transparent"
                )}
              >
                <Icon name={node.icon} />
                <Label text={node.text} />
              </span>
            </li>
          ))}
        </ul>
        <ScrollTrack className="pt-[26px]" thumb="h-[240px]" />
      </div>

      <div className="grid grid-cols-[repeat(4,129px)] justify-between gap-y-[25px] px-[19px] pt-2.5">
        <DialogButton>すべて選択</DialogButton>
        <DialogButton>すべて取消</DialogButton>
        <span />
        <span />
        <DialogButton>開く...</DialogButton>
        <DialogButton primary>出力...</DialogButton>
        <DialogButton>キャンセル</DialogButton>
        <DialogButton>ヘルプ</DialogButton>
      </div>
    </section>
  );
}

const BEAM = "#e77762";

// Lengthwise strips of deck drawn inside one floor bay
function Floor({ y, h, x = 1240, w = 400 }: { y: number; h: number; x?: number; w?: number }) {
  const lines = [];
  for (let at = y + 8; at < y + h; at += 12.85) lines.push(Math.round(at) + 0.5);
  return (
    <g>
      <rect x={x} y={y} width={w} height={h} fill="#dcffdc" />
      {lines.map((at) => (
        <path key={at} d={`M${x} ${at}h${w}`} stroke="#a9cba9" />
      ))}
    </g>
  );
}

function Bar({ x, y, w, h, fill = BEAM }: { x: number; y: number; w: number; h: number; fill?: string }) {
  return <rect x={x + 0.5} y={y + 0.5} width={w} height={h} fill={fill} stroke="#000" />;
}

function Tag({ x, y, w = 33, text }: { x: number; y: number; w?: number; text: string }) {
  return (
    <g>
      <rect x={x + 0.5} y={y + 0.5} width={w} height="16" fill="#ffffe1" stroke="#000" />
      <text x={x + w / 2} y={y + 14} textAnchor="middle">{text}</text>
    </g>
  );
}

function SideTag({ x, y, text }: { x: number; y: number; text: string }) {
  return (
    <g>
      <rect x={x + 0.5} y={y + 0.5} width="16" height="32" fill="#ffffe1" stroke="#000" />
      <text transform={`translate(${x + 14} ${y + 16}) rotate(-90)`} textAnchor="middle">{text}</text>
    </g>
  );
}

function Axis({ x, y, text }: { x: number; y: number; text: string }) {
  return (
    <g>
      <circle cx={x} cy={y} r="16.500" fill="none" stroke="#f00" />
      <text x={x - 2} y={y + 6} textAnchor="middle" fill="#f00">{text}</text>
    </g>
  );
}

const joists = [1382, 1446, 1511, 1575];

function FloorPlan() {
  return (
    <svg
      role="img"
      aria-label="平面図 2F層"
      className="size-full text-base font-['Noto_Sans_CJK_JP',sans-serif] [font-feature-settings:'hwid']"
    >
      <g transform="translate(-424 -188)">
        <path
          d="M1321.500 246v644M1643.500 246v644M700 294.500h991M700 479.500h991M700 664.500h991M700 841.500h991"
          stroke="#c3c3c3"
        />
        <Floor y={299} h={175} />
        <Floor y={484} h={175} />
        <Floor y={668} h={170} w={77} />

        {[299, 484].map((y) => (
          <g key={y}>
            {joists.map((x) => (
              <Bar key={x} x={x} y={y} w={7} h={175} fill="#783a3a" />
            ))}
          </g>
        ))}
        {[299, 484, 668].map((y) => (
          <Bar key={y} x={1253} y={y} w={7} h={175} fill="#783a3a" />
        ))}

        <Bar x={1317} y={290} w={8} h={550} />
        <Bar x={1639} y={290} w={8} h={374} />
        <Bar x={1100} y={289} w={548} h={9} />
        <Bar x={1100} y={475} w={220} h={8} />
        <Bar x={1320} y={474} w={328} h={9} />
        <Bar x={1100} y={660} w={220} h={8} />
        <Bar x={1320} y={659} w={328} h={10} />
        <Bar x={1100} y={838} w={225} h={8} />
        <path
          d="M1289.500 290v8M1289.500 475v8M1289.500 660v8M1289.500 838v8M1353.500 290v8M1353.500 475v8M1353.500 660v8M1611.500 290v8M1611.500 475v8M1611.500 660v8M1317 326.500h9M1317 447.500h9M1317 511.500h9M1317 632.500h9M1317 809.500h9M1639 326.500h9M1639 447.500h9M1639 511.500h9M1639 632.500h9"
          stroke="#000"
        />
        {[289, 474, 659, 836].map((y) => (
          <rect key={y} x="1316" y={y} width="10" height="10" fill={BEAM} stroke="#000" strokeWidth="2" />
        ))}
        {[289, 474, 659].map((y) => (
          <rect key={y} x="1638" y={y} width="10" height="10" fill={BEAM} stroke="#000" strokeWidth="2" />
        ))}
        <circle cx="1643.500" cy="841.500" r="3.500" fill="#fff" stroke="#000" />

        {[272, 457, 642].map((y) => (
          <g key={y}>
            <Tag x={1326} y={y} text="C35" />
            <Tag x={1648} y={y} text="C35" w={32} />
            <Tag x={1462} y={y + 1} text="G60A" w={40} />
          </g>
        ))}
        <Tag x={1326} y={819} text="C35" />
        {[370, 555].map((y) => (
          <g key={y}>
            <SideTag x={1301} y={y} text="G60" />
            {joists.map((x) => (
              <SideTag key={x} x={x - 16} y={y} text="B40" />
            ))}
            <SideTag x={1623} y={y} text="G60" />
          </g>
        ))}
        <SideTag x={1301} y={736} text="G60" />

        <g stroke="#f00">
          <path d="M800 941.500h849M800 966.500h849M806.500 908v65M1128.500 908v39M1321.500 908v39M1643.500 908v65" />
          {[
            [806.5, 941.5],
            [1128.5, 941.5],
            [1321.5, 941.5],
            [1643.5, 941.5],
            [806.5, 966.5],
            [1643.5, 966.5],
          ].map(([x, y]) => (
            <circle key={`${x}-${y}`} cx={x} cy={y} r="2" fill="#f00" />
          ))}
        </g>
        <g fill="#f00" textAnchor="middle">
          <text x="967" y="939">10,000</text>
          <text x="1224" y="939">6,000</text>
          <text x="1482" y="939">10,000</text>
          <text x="1224" y="964">26,000</text>
        </g>
        <Axis x={806.5} y={999} text="X1" />
        <Axis x={1128.5} y={999} text="X2" />
        <Axis x={1321.5} y={999} text="X3" />
        <Axis x={1643.5} y={999} text="X4" />
        <Axis x={648.5} y={294} text="Y4" />
        <Axis x={648.5} y={479} text="Y3" />
        <Axis x={648.5} y={664} text="Y2" />
        <Axis x={648.5} y={841} text="Y1" />
      </g>
    </svg>
  );
}

const menus = ["ファイル(F)", "編集(E)", "表示(V)", "ツール(T)", "ウィンドウ(W)", "ヘルプ、解説書(H)"];

function TitleBar() {
  return (
    <header className="flex h-[43px] shrink-0 items-center bg-[#f3f3f3] pb-1 pl-3 text-[#8b8b8b]">
      <Icon name="app" className="mb-0.5 size-[22px]" />
      <h1 className="ml-[9px] grow text-lg whitespace-pre">
        Super Build／SS7 Premium  Ver.1.1.22.1 - Demo4_v3 - [平面図 - 2F層(1F階)]
      </h1>
      <div className="flex">
        {["M1 8h14", "M2 1.500h12v13H2z", "M1 1l14 14M15 1L1 15"].map((d, i) => (
          <button
            key={d}
            type="button"
            aria-label={["最小化", "最大化", "閉じる"][i]}
            className="flex w-[70px] justify-center"
          >
            <svg viewBox="0 0 16 16" className="size-4" aria-hidden="true">
              <path d={d} fill="none" stroke="#8b8b8b" strokeWidth="1.200" />
            </svg>
          </button>
        ))}
      </div>
    </header>
  );
}

function MenuBar() {
  return (
    <nav className="flex h-[34px] shrink-0 items-center border-b border-[#aeb0b5] bg-white">
      <span className="ml-1 h-6 border-l-2 border-dotted border-gray-400" />
      <Icon name="planFrame" className="ml-[5px] size-[22px]" />
      <div className="flex grow gap-4 pl-3 text-base">
        {menus.map((menu) => (
          <button key={menu} type="button" className="whitespace-nowrap">{menu}</button>
        ))}
      </div>
      <div className="flex gap-1 self-end pr-0.5 pb-px">
        {["M3 10h6", "M4 5h6v4M2 7h5v4H2zM4 5v2", "M3 3l6 7M9 3l-6 7"].map((d, i) => (
          <button
            key={d}
            type="button"
            aria-label={["ウィンドウ最小化", "元に戻す", "ウィンドウを閉じる"][i]}
            className="flex h-6 w-[23px] items-center justify-center border border-gray-200"
          >
            <svg viewBox="0 0 12 12" className="size-3" aria-hidden="true">
              <path d={d} fill="none" stroke="#52647a" strokeWidth="1.600" />
            </svg>
          </button>
        ))}
      </div>
    </nav>
  );
}

function Sidebar() {
  return (
    <aside className={clsx("flex w-[420px] shrink-0 flex-col bg-[#f0f0f0] text-lg leading-6", TREE_FONT)}>
      <div className="flex h-[33px] shrink-0 items-center justify-between bg-linear-to-b from-[#9ab5d6] to-[#b5cfea] pr-1.5 pl-1">
        <span className="text-base">ツリーメニュー</span>
        <button type="button" aria-label="固定">
          <svg viewBox="0 0 14 14" className="size-3.5" aria-hidden="true">
            <path d="M4 2h6v6H4zM1.500 8.500h11M7 9v4M9 2v6" fill="none" stroke="#000" strokeWidth="1.500" />
          </svg>
        </button>
      </div>
      <div className="mt-0.5 flex min-h-0 grow-[403] basis-0 border border-[#a9a9a9]">
        <SideTree nodes={inputTree} />
        <ScrollTrack className="pt-[27px]" thumb="h-[186px]" />
      </div>
      <div className="mt-0.5 flex min-h-0 grow-[437] basis-0 flex-col border border-[#a9a9a9]">
        <button
          type="button"
          className="mx-0.5 mt-0.5 h-[35px] shrink-0 rounded-[4px] border border-[#c8c8c8] bg-[#fdfdfd] pt-0.5 pl-7 whitespace-pre"
        >
          結果1  2026/09/29 10:37:48
        </button>
        <div className="flex min-h-0 grow">
          <SideTree nodes={resultTree} />
          <ScrollTrack className="pt-[113px]" thumb="h-[258px]" />
        </div>
      </div>
      <div className="mt-0.5 shrink-0 border border-[#a9a9a9] p-0.5">
        <button
          type="button"
          className="h-[34px] w-full rounded-[4px] border border-[#c8c8c8] bg-[#fdfdfd] pt-0.5"
        >
          別途計算機能
        </button>
      </div>
    </aside>
  );
}

function ViewTool({ icon }: { icon?: string }) {
  return (
    <span className="flex w-8 shrink-0 justify-center">{icon && <Icon name={icon} />}</span>
  );
}

function ViewBar() {
  return (
    <div className="flex h-[33px] shrink-0 items-center bg-[#f0f0f0]">
      <Icon name="hand" className="ml-1 size-6" />
      <select
        aria-label="表示階"
        className="ml-[5px] h-[30px] w-[224px] shrink-0 appearance-none border border-[#d0d0d0] bg-white pl-[3px]"
      >
        <option>2F層(1F階)</option>
      </select>
      <ViewTool icon="panelBlue" />
      <ViewTool />
      <ViewTool />
      <ViewTool icon="panelBlue" />
      <Separator />
      <Icon name="magnifier" className="ml-1 size-6" />
      <input
        type="range"
        aria-label="拡大率"
        defaultValue="6"
        className="mx-1 h-7 w-[225px] shrink-0 appearance-none bg-transparent [&::-webkit-slider-thumb]:h-7 [&::-webkit-slider-thumb]:w-3 [&::-webkit-slider-thumb]:appearance-none [&::-webkit-slider-thumb]:bg-[#0078d4]"
      />
      <Icon name="magnifierPlus" className="mr-1.5 size-6" />
      <Separator />
      <ViewTool icon="move" />
      <Separator />
      <span className="flex h-[33px] w-8 shrink-0 items-center justify-center rounded-[3px] border border-[#92c8f0] bg-[#cce6fb]">
        <Icon name="panelBlue" />
      </span>
      <ViewTool icon="chart" />
      <Separator />
      <ViewTool icon="message" />
      <ViewTool icon="splitWindow" />
      <Separator />
      <ViewTool icon="redGrid" />
      <ViewTool icon="building" />
    </div>
  );
}

const App: React.FC = () => {
  return (
    <div
      className={clsx(
        "relative flex h-screen min-w-0 flex-col overflow-hidden rounded-t-[10px] border-r-2 border-[#8d9096] bg-white text-lg leading-6 text-black",
        UI_FONT
      )}
    >
      <TitleBar />
      <MenuBar />
      <Toolbar groups={mainTools} />
      <Toolbar groups={memberTools} />
      <div className="flex min-h-0 grow">
        <Sidebar />
        <main className="ml-1 flex min-w-0 grow flex-col">
          <ViewBar />
          <div className="min-h-0 grow overflow-hidden bg-white">
            <FloorPlan />
          </div>
        </main>
      </div>
      <footer className="h-[5px] shrink-0 border-t border-[#d0d0d0] bg-[#f0f0f0]" />
      <CsvDialog />
    </div>
  );
};

export default App;
